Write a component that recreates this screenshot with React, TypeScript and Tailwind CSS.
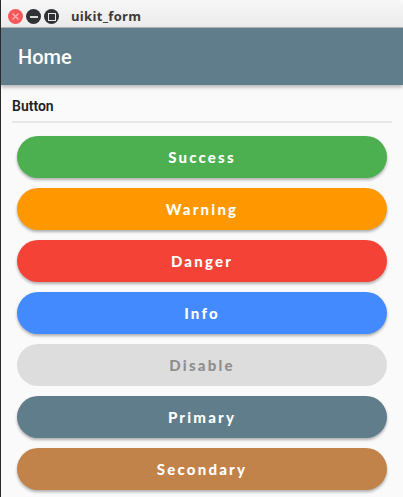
import React from "react";

const buttons: { label: string; cls: string }[] = [
  { label: "Success", cls: "bg-[#4caf50] text-white shadow-[0_2px_3px_rgba(0,0,0,0.3)]" },
  { label: "Warning", cls: "bg-[#ff9800] text-white shadow-[0_2px_3px_rgba(0,0,0,0.3)]" },
  { label: "Danger", cls: "bg-[#f44336] text-white shadow-[0_2px_3px_rgba(0,0,0,0.3)]" },
  { label: "Info", cls: "bg-[#448aff] text-white shadow-[0_2px_3px_rgba(0,0,0,0.3)]" },
  { label: "Disable", cls: "bg-[#dddddd] text-[#8e8e8e]" },
  { label: "Primary", cls: "bg-[#607d8b] text-white shadow-[0_2px_3px_rgba(0,0,0,0.3)]" },
  { label: "Secondary", cls: "bg-[#c2834a] text-white shadow-[0_2px_3px_rgba(0,0,0,0.3)]" },
];

export default function App() {
  return (
    <div className="w-[403px] h-[497px] overflow-hidden flex flex-col bg-[#fafafa] border-l border-[#2a2a2a] relative">
      {/* Title bar */}
      <div className="h-[28px] shrink-0 flex items-center pt-[6px] bg-gradient-to-b from-[#f7f7f7] to-[#ebebeb] border-b border-[#b8b8b8] rounded-tr-[6px] rounded-tl-[6px]">
        <div className="flex items-center gap-[3px] pl-[7px]">
          <div className="w-[15px] h-[15px] rounded-full bg-[#f4585a] flex items-center justify-center">
            <svg width="9" height="9" viewBox="0 0 9 9">
              <path d="M1.5 1.5 L7.5 7.5 M7.5 1.5 L1.5 7.5" stroke="#ffb3b3" strokeWidth="1.3" />
            </svg>
          </div>
          <div className="w-[15px] h-[15px] rounded-full bg-[#2f3235] flex items-center justify-center">
            <div className="w-[8px] h-[2px] bg-[#d8d8d8]" />
          </div>
          <div className="w-[15px] h-[15px] rounded-full bg-[#2f3235] flex items-center justify-center">
            <div className="w-[8px] h-[8px] border-[1.5px] border-[#e8e8e8]" />
          </div>
        </div>
        <div className="ml-[12px] text-[13px] font-bold text-[#3a3a3a] tracking-[0.3px]" style={{ fontFamily: "'Open Sans', 'DejaVu Sans', sans-serif" }}>
          uikit_form
        </div>
      </div>
      {/* App bar */}
      <div className="h-[57px] shrink-0 bg-[#607d8b] flex items-center pl-[17px] shadow-[0_2px_4px_rgba(0,0,0,0.3)] z-10">
        <span className="text-white text-[20px] font-medium" style={{ fontFamily: "Roboto, 'Liberation Sans', sans-serif" }}>Home</span>
      </div>
      {/* Body */}
      <div className="flex flex-col px-[11px]">
        <div className="pt-[11px] h-[36px] text-[14px] font-semibold text-[#222]" style={{ fontFamily: "Roboto, 'Liberation Sans', sans-serif" }}>
          Button
        </div>
        <div className="h-[2px] bg-[#e8e8e8]" />
        <div className="flex flex-col gap-[10px] pt-[13px] px-[5px]">
          {buttons.map((b) => (
            <div
              key={b.label}
              className={`h-[42px] rounded-full flex items-center justify-center text-[15px] font-black tracking-[2.2px] ${b.cls}`}
              style={{ fontFamily: "Lato, 'Open Sans', sans-serif" }}
            >
              {b.label}
            </div>
          ))}
        </div>
      </div>
    </div>
  );
}
